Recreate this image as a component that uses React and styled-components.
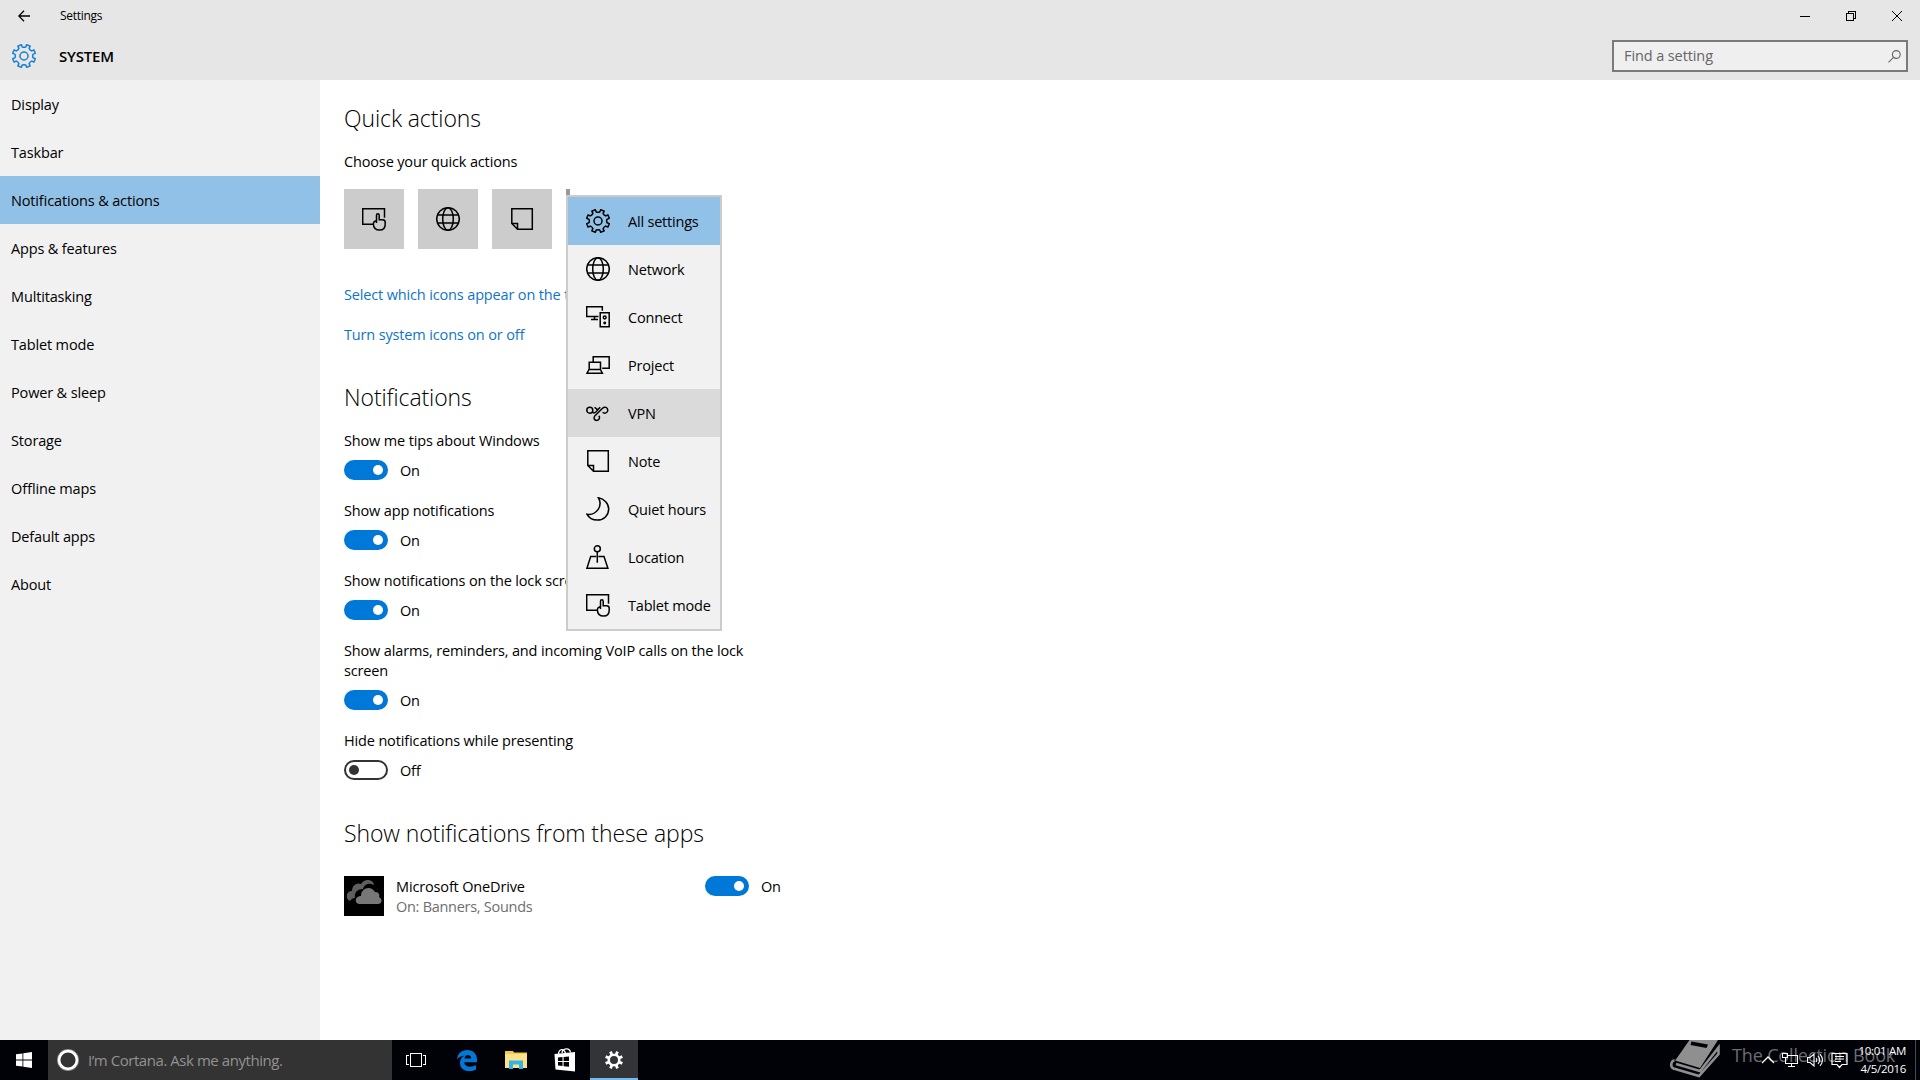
import React, { useState } from "react";
import styled, { createGlobalStyle } from "styled-components";

const GlobalStyle = createGlobalStyle`
  * {
    box-sizing: border-box;
  }
  body {
    margin: 0;
    overflow: hidden;
    background: #fff;
    color: #000;
    font-family: "Open Sans", "Noto Sans", sans-serif;
    font-size: 14.5px;
    line-height: 20px;
    letter-spacing: -0.15px;
    font-feature-settings: "liga" 1;
  }
`;

// outline of an eight-tooth gear around (12, 12)
function gearPath(outer, root, tip, base) {
  const at = (r, a) =>
    `${(12 + r * Math.cos(a)).toFixed(2)} ${(12 + r * Math.sin(a)).toFixed(2)}`;
  let d = "";
  for (let i = 0; i < 8; i++) {
    const a = ((i + 0.5) * Math.PI) / 4;
    const next = a + Math.PI / 4;
    d += `${i === 0 ? "M" : "L"}${at(root, a - base)}L${at(outer, a - tip)}L${at(outer, a + tip)}L${at(root, a + base)}`;
    d += `Q${at(root - 0.9, (a + next) / 2)} ${at(root, next - base)}`;
  }
  return d + "Z";
}

const GearIcon = () => (
  <Icon viewBox="0 0 24 24">
    <path d={gearPath(11.6, 9.2, 0.16, 0.2)} />
    <circle cx="12" cy="12" r="4" />
  </Icon>
);

const GlobeIcon = () => (
  <Icon viewBox="0 0 24 24">
    <circle cx="12" cy="12" r="11.3" />
    <ellipse cx="12" cy="12" rx="5.3" ry="11.3" />
    <path d="M1.5 8h21M1.5 16h21" />
  </Icon>
);

const ConnectIcon = () => (
  <Icon viewBox="0 0 24 24">
    <path d="M12.5 11.5H.7V1.7h15.6v4M8.5 11.5v3M5 14.5h7M14.2 7.7h9v14h-9z" />
    <circle cx="18.7" cy="12.5" r="1.4" />
    <circle cx="18.7" cy="18" r=".7" />
  </Icon>
);

const ProjectIcon = () => (
  <Icon viewBox="0 0 24 24">
    <path d="M7.2 8.5V3.7h16v11.6h-7M3.2 9.2h11.3v7.3H3.2zM3 16.5L.9 20.3h15.5l-2-3.8" />
  </Icon>
);

const VpnIcon = () => (
  <Icon viewBox="0 0 24 24">
    <circle cx="3.8" cy="9.2" r="3" />
    <path d="M6.2 11c1.3 1.3 2.4 1.2 3.6 0l1.700-1.800M8.600 6.300l3 2.600 2.600-2.600" />
    <path d="M16.600 11.300c2 1.700 5.200.6 5.200-2.100 0-2.900-3.400-3.900-5.300-1.900L9 14.800c-2 2-.7 4.600 1.700 4.600 2.600 0 3.700-2.700 2.100-4.600" />
  </Icon>
);

const NoteIcon = () => (
  <Icon viewBox="0 0 24 24">
    <path d="M1.8 1.7h20.5v20.5H7.5l-5.7-5.7zM2.3 16.5h5.2v5.2" />
  </Icon>
);

const MoonIcon = () => (
  <Icon viewBox="0 0 24 24">
    <path d="M12.4.8c5.8 1 10.3 5.5 10.3 11.3 0 6.3-4.9 11-11.3 11C6.6 23.1 2.8 20.8.9 17.2c4.2.7 8.3-.8 10.9-4.3 2.700-3.700 3-8 .6-12.100z" />
  </Icon>
);

const LocationIcon = () => (
  <Icon viewBox="0 0 24 24">
    <circle cx="11.3" cy="3.8" r="3" />
    <path d="M11.3 6.8v11M10.2 11.5H4.7L.9 23.3h21L18 11.5h-5.6" />
  </Icon>
);

const TabletIcon = () => (
  <Icon viewBox="0 0 24 24">
    <path d="M11.5 17.3H.7V1.7h21.8v9" />
    <path d="M14.5 16V8.2c0-2 2.7-2 2.7 0v4.6h3.3c1.7 0 2.7.8 2.7 2.5v2c0 3.5-2 5.8-5.5 5.8-4.3 0-6.3-2.600-6.3-6.100 0-2.200 1.400-3.200 3.100-2.800" />
  </Icon>
);

const pages = [
  "Display",
  "Taskbar",
  "Notifications & actions",
  "Apps & features",
  "Multitasking",
  "Tablet mode",
  "Power & sleep",
  "Storage",
  "Offline maps",
  "Default apps",
  "About",
];

const actions = [
  { name: "All settings", icon: <GearIcon /> },
  { name: "Network", icon: <GlobeIcon /> },
  { name: "Connect", icon: <ConnectIcon /> },
  { name: "Project", icon: <ProjectIcon /> },
  { name: "VPN", icon: <VpnIcon /> },
  { name: "Note", icon: <NoteIcon /> },
  { name: "Quiet hours", icon: <MoonIcon /> },
  { name: "Location", icon: <LocationIcon /> },
  { name: "Tablet mode", icon: <TabletIcon /> },
];

function Toggle({ start }) {
  const [on, setOn] = useState(start);
  return (
    <ToggleRow>
      <Switch $on={on} onClick={() => setOn(!on)}>
        <Knob $on={on} />
      </Switch>
      <ToggleText>{on ? "On" : "Off"}</ToggleText>
    </ToggleRow>
  );
}

function Setting({ label, start = true }) {
  return (
    <SettingBlock>
      <Label>{label}</Label>
      <Toggle start={start} />
    </SettingBlock>
  );
}

function Header() {
  return (
    <Top>
      <TitleBar>
        <BackButton>
          <svg width="12" height="12" viewBox="0 0 12 12" fill="none" stroke="#000" strokeWidth="1.3">
            <path d="M12 6H.8M6 .7L.8 6 6 11.3" />
          </svg>
        </BackButton>
        <AppName>Settings</AppName>
        <WindowButton>
          <svg width="10" height="10" stroke="#000" shapeRendering="crispEdges">
            <path d="M0 5.5h10" />
          </svg>
        </WindowButton>
        <WindowButton>
          <svg width="10" height="10" fill="none" stroke="#000" shapeRendering="crispEdges">
            <path d="M.5 2.5h7v7h-7zM2.5 2.5v-2h7v7h-2" />
          </svg>
        </WindowButton>
        <WindowButton>
          <svg width="10" height="10" stroke="#000">
            <path d="M0 0l10 10M10 0L0 10" />
          </svg>
        </WindowButton>
      </TitleBar>
      <SubBar>
        <HeaderGear>
          <GearIcon />
        </HeaderGear>
        <PageName>SYSTEM</PageName>
        <SearchBox>
          <SearchText>Find a setting</SearchText>
          <svg width="13" height="13" fill="none" stroke="#666" strokeWidth="1.1">
            <circle cx="8.3" cy="4.5" r="3.9" />
            <path d="M5.5 7.4L.5 12.4" />
          </svg>
        </SearchBox>
      </SubBar>
    </Top>
  );
}

function Taskbar() {
  return (
    <Bar>
      <StartButton>
        <svg width="16" height="16" fill="#fff">
          <path d="M0 2.3L6.5 1.4V7.5H0zM7.3 1.3L16 0v7.5H7.3zM0 8.4h6.5v6.2L0 13.7zM7.3 8.4H16V16l-8.7-1.3z" />
        </svg>
      </StartButton>
      <Cortana>
        <svg width="24" height="24" fill="none">
          <circle cx="12" cy="12" r="9.8" stroke="#8c8c8c" strokeWidth="2.5" />
          <circle cx="12" cy="12" r="8.9" stroke="#fff" strokeWidth="2.6" />
        </svg>
        <CortanaText>I’m Cortana. Ask me anything.</CortanaText>
      </Cortana>
      <TaskButtons>
        <TaskButton>
          <svg width="20" height="14" fill="none" stroke="#fff" shapeRendering="crispEdges">
            <path d="M4.5.5h11v13h-11zM3 2.5H.5v9H3M17 2.5h2.5v9H17" />
          </svg>
        </TaskButton>
        <TaskButton>
          <svg width="20" height="21" viewBox="0 0 20 21" fill="#0078d7">
            <path d="M0 9.3C.6 3.6 4.5 0 10.2 0 16.2 0 20 4 20 9.8v2.5H7.3c.1 3 2.7 4.4 5.9 4.4 2.2 0 4-.5 5.8-1.6v4.3C17 20.5 14.8 21 12.2 21 6.4 21 3 17.7 3 12.9c0-3.3 1.7-5.9 4.8-7.4C4.7 5.7 1.9 7.2 0 9.3zM7.4 8.5h6.7c0-2.3-1-3.6-3.1-3.6-2 0-3.3 1.5-3.6 3.6z" />
          </svg>
        </TaskButton>
        <TaskButton>
          <svg width="22" height="18" viewBox="0 0 22 18">
            <path d="M0 0h8l1 1.5h13V17H0z" fill="#f3c94f" />
            <path d="M0 3h22v14H0z" fill="#fce08a" />
            <path d="M4 18V9.5h14V18h-4v-4.5H8V18z" fill="#34b4e4" />
          </svg>
        </TaskButton>
        <TaskButton>
          <svg width="22" height="24" viewBox="0 0 22 24">
            <path d="M4.5 6C5 .5 10 .2 11.5 5M8 5C8.5.2 15.5-.8 16.5 4.5" fill="none" stroke="#fff" strokeWidth="1.3" />
            <path d="M.5 6L21 4v19.5l-19.5-2z" fill="#fff" />
            <path d="M4 9.5l4.5-.4V13H4zM9.6 9l5.400-.5V13H9.600zM4 14h4.500v4L4 17.600zM9.600 14H15v4.700l-5.400-.5z" fill="#000208" />
          </svg>
        </TaskButton>
        <TaskButton $active>
          <svg width="18" height="18" viewBox="0 0 24 24" fill="#fff" fillRule="evenodd">
            <path d={gearPath(12.2, 9, 0.16, 0.2) + "M12 6.7a5.3 5.3 0 1 0 0 10.6a5.3 5.3 0 1 0 0-10.6Z"} />
          </svg>
        </TaskButton>
      </TaskButtons>
      <Watermark>
        <svg width="51" height="38" viewBox="0 0 51 38">
          <path d="M19.5 0H48L30 28 5 20.5C10 14 14.5 7 19.5 0z" fill="#8f8f8f" />
          <path d="M4.5 20.5C1 20.5 0 27 3.5 28.5L29 36 48.500 14V7.5L30 31 6 24" fill="none" stroke="#8f8f8f" strokeWidth="2.6" />
          <path d="M21.5 1.5L38 4.5 36.5 8l-16-3z" fill="#000208" />
        </svg>
        <span>The Collection Book</span>
      </Watermark>
      <Tray>
        <svg width="14" height="8" fill="none" stroke="#fff" strokeWidth="1.3">
          <path d="M1 7l6-6 6 6" />
        </svg>
        <svg width="17" height="14" fill="none" stroke="#fff" shapeRendering="crispEdges">
          <path d="M5 2.5h10.5v7.5h-12V6M9.5 10v3M6 13h7M.5.5h5v4h-5zM3 4.5V6" />
        </svg>
        <svg width="17" height="14" fill="none" stroke="#fff" strokeWidth="1.1">
          <path d="M.6 4.5h2.5L7 1v12L3.1 9.5H.6zM9 5q1.6 2 0 4M11 3q3.5 4 0 8M13 1.2q5 5.8 0 11.6" />
        </svg>
        <svg width="17" height="17" fill="none" stroke="#fff" strokeWidth="1.2">
          <path d="M1 1.5h15v11H11l-2.5 3-2.5-3H1zM4 4.5h9M4 7h9M4 9.5h6" />
        </svg>
      </Tray>
      <Clock>
        <span>10:01 AM</span>
        <span>4/5/2016</span>
      </Clock>
      <ShowDesktop />
    </Bar>
  );
}

function App() {
  return (
    <Screen>
      <GlobalStyle />
      <Header />
      <Body>
        <Sidebar>
          {pages.map((p) => (
            <SidebarItem key={p} $active={p === "Notifications & actions"}>
              {p}
            </SidebarItem>
          ))}
        </Sidebar>
        <Content>
          <Heading>Quick actions</Heading>
          <Label>Choose your quick actions</Label>
          <Tiles>
            <Tile><TabletIcon /></Tile>
            <Tile><GlobeIcon /></Tile>
            <Tile><NoteIcon /></Tile>
            <Tile $pressed>
              <Menu>
                {actions.map((a, i) => (
                  <MenuItem key={a.name} $selected={i === 0} $hover={i === 4}>
                    {a.icon}
                    <MenuText>{a.name}</MenuText>
                  </MenuItem>
                ))}
              </Menu>
            </Tile>
          </Tiles>
          <Links>
            <Link>Select which icons appear on the taskbar</Link>
            <Link>Turn system icons on or off</Link>
          </Links>
          <Heading>Notifications</Heading>
          <Settings>
            <Setting label="Show me tips about Windows" />
            <Setting label="Show app notifications" />
            <Setting label="Show notifications on the lock screen" />
            <Setting label="Show alarms, reminders, and incoming VoIP calls on the lock screen" />
            <Setting label="Hide notifications while presenting" start={false} />
          </Settings>
          <Heading>Show notifications from these apps</Heading>
          <AppRow>
            <AppIcon>
              <svg width="36" height="28" viewBox="0 0 36 28" fill="#777">
                <path d="M4 22c-5-2-4-10 2-10 0-6 5-9 9-7 4-7 13-4 13 1-6-3-10 0-11 4-6 0-9 4-8 9-2 0-4 1-5 3z" opacity=".8" />
                <path d="M13 25c-5-1-4-8 2-8 0-8 10-11 14-4 4 0 5 3 4 5 4 2 3 7-1 7z" />
              </svg>
            </AppIcon>
            <AppText>
              <span>Microsoft OneDrive</span>
              <AppDetail>On: Banners, Sounds</AppDetail>
            </AppText>
            <Toggle start={true} />
          </AppRow>
        </Content>
      </Body>
      <Taskbar />
    </Screen>
  );
}

const Screen = styled.div`
  width: 1920px;
  height: 1080px;
  display: flex;
  flex-direction: column;
`;

const Icon = styled.svg`
  width: 24px;
  height: 24px;
  flex: none;
  fill: none;
  stroke: currentColor;
  stroke-width: 1.5;
`;

const Top = styled.header`
  height: 80px;
  background: #e6e6e6;
`;
const TitleBar = styled.div`
  display: flex;
  height: 32px;
`;
const BackButton = styled.div`
  width: 60px;
  padding: 10px 0 0 18px;
  line-height: 0;
`;
const AppName = styled.div`
  flex: 1;
  font-size: 12px;
  letter-spacing: -0.3px;
  padding-top: 6px;
`;
const WindowButton = styled.div`
  width: 46px;
  display: flex;
  align-items: center;
  justify-content: center;
`;
const SubBar = styled.div`
  display: flex;
  height: 48px;
`;
const HeaderGear = styled.div`
  width: 59px;
  padding: 12px;
  color: #1a7fd0;
`;
const PageName = styled.div`
  flex: 1;
  padding-top: 14px;
  font-size: 15px;
  font-weight: 600;
  letter-spacing: -0.2px;
`;
const SearchBox = styled.div`
  width: 296px;
  height: 32px;
  margin: 8px 12px 0 0;
  padding: 0 5px 0 10px;
  border: 2px solid #7a7a7a;
  background: #efefef;
  color: #666;
  display: flex;
  align-items: center;
  justify-content: space-between;
`;
const SearchText = styled.span`
  letter-spacing: -0.1px;
`;

const Body = styled.div`
  flex: 1;
  display: flex;
`;
const Sidebar = styled.nav`
  width: 320px;
  background: #f1f1f1;
`;
const SidebarItem = styled.div`
  height: 48px;
  padding: 15px 11px 13px;
  background: ${(p) => (p.$active ? "#91c1e7" : "transparent")};
`;
const Content = styled.main`
  width: 460px;
  padding: 22px 0 0 24px;
`;
const Heading = styled.h1`
  margin: 0 0 18px;
  font-size: 23px;
  line-height: 32px;
  font-weight: 300;
  letter-spacing: -0.1px;
  white-space: nowrap;
`;
const Label = styled.div`
  width: 410px;
`;
const Tiles = styled.div`
  display: flex;
  gap: 14px;
  margin-top: 17px;
`;
const Tile = styled.div`
  width: ${(p) => (p.$pressed ? "4px" : "60px")};
  height: 60px;
  background: ${(p) => (p.$pressed ? "#999" : "#ccc")};
  display: flex;
  align-items: center;
  justify-content: center;
  position: relative;
`;
const Menu = styled.div`
  position: absolute;
  z-index: 2;
  left: 0;
  top: 6px;
  width: 156px;
  border: 2px solid #ccc;
  background: #f1f1f1;
`;
const MenuItem = styled.div`
  height: 48px;
  padding-left: 18px;
  display: flex;
  align-items: center;
  gap: 18px;
  white-space: nowrap;
  background: ${(p) => (p.$selected ? "#91c1e7" : p.$hover ? "#dadada" : "transparent")};
`;
const MenuText = styled.span`
  padding-top: 2px;
  letter-spacing: -0.2px;
`;
const Links = styled.div`
  display: flex;
  flex-direction: column;
  gap: 20px;
  margin: 36px 0;
`;
const Link = styled.a`
  color: #0f75c8;
`;
const Settings = styled.div`
  display: flex;
  flex-direction: column;
  gap: 21px;
  margin-bottom: 37px;
`;
const SettingBlock = styled.div`
  display: flex;
  flex-direction: column;
  gap: 9px;
`;
const ToggleRow = styled.div`
  display: flex;
  flex: none;
  height: 20px;
`;
const Switch = styled.div`
  width: 44px;
  height: 20px;
  border-radius: 10px;
  border: 2px solid ${(p) => (p.$on ? "#0078d7" : "#333")};
  background: ${(p) => (p.$on ? "#0078d7" : "#fff")};
  display: flex;
  align-items: center;
  justify-content: ${(p) => (p.$on ? "flex-end" : "flex-start")};
  padding: 0 3px;
`;
const Knob = styled.div`
  width: 10px;
  height: 10px;
  border-radius: 50%;
  background: ${(p) => (p.$on ? "#fff" : "#333")};
`;
const ToggleText = styled.span`
  padding: 1px 0 0 12px;
  letter-spacing: -0.3px;
`;
const AppRow = styled.div`
  display: flex;
  margin-top: 27px;
`;
const AppIcon = styled.div`
  flex: none;
  width: 40px;
  height: 40px;
  padding: 3px 2px;
  background: #000;
`;
const AppText = styled.div`
  flex: none;
  width: 321px;
  padding: 1px 0 0 12px;
  display: flex;
  flex-direction: column;
`;
const AppDetail = styled.span`
  color: #6e6e6e;
  letter-spacing: -0.28px;
`;

const Bar = styled.footer`
  height: 40px;
  background: #000208;
  display: flex;
  position: relative;
`;
const StartButton = styled.div`
  width: 48px;
  display: flex;
  align-items: center;
  justify-content: center;
`;
const Cortana = styled.div`
  width: 344px;
  background: #333;
  color: #929292;
  display: flex;
  align-items: center;
  gap: 8px;
  padding-left: 8px;
`;
const CortanaText = styled.span`
  font-size: 15px;
  letter-spacing: -0.45px;
`;
const TaskButtons = styled.div`
  display: flex;
  gap: 1px;
  flex: 1;
`;
const TaskButton = styled.div`
  width: 48px;
  display: flex;
  align-items: center;
  justify-content: center;
  background: ${(p) => (p.$active ? "#333438" : "transparent")};
  box-shadow: ${(p) => (p.$active ? "inset 0 -2px #76b9ed" : "none")};
  &:first-child {
    margin-right: 2px;
  }
`;
const Watermark = styled.div`
  position: absolute;
  left: 1670px;
  top: 0;
  display: flex;
  gap: 11px;
  font-size: 18px;
  line-height: 30px;
  color: #6c6d70;
  white-space: nowrap;
`;
const Tray = styled.div`
  display: flex;
  align-items: center;
  gap: 7.5px;
  margin-right: 5px;
  position: relative;
`;
const Clock = styled.div`
  width: 62px;
  padding: 2px 9px 0 0;
  display: flex;
  flex-direction: column;
  align-items: flex-end;
  color: #fff;
  font-size: 11.5px;
  letter-spacing: -0.3px;
  line-height: 18px;
  position: relative;
`;
const ShowDesktop = styled.div`
  width: 5px;
  border-left: 1px solid #4a4b4f;
`;

export default App;
